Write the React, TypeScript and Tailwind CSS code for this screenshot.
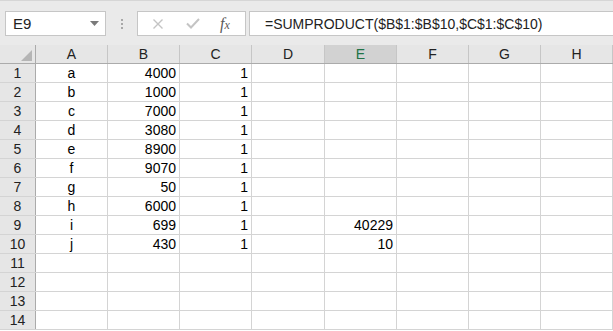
import React from 'react';

const cols = ['A', 'B', 'C', 'D', 'E', 'F', 'G', 'H'];
const colWidths = ['w-[72px]', 'w-[72px]', 'w-[72px]', 'w-[73px]', 'w-[72px]', 'w-[72px]', 'w-[72px]', 'w-[72px]'];

type Row = { a?: string; b?: string; c?: string; e?: string };

const rows: Row[] = [
  { a: 'a', b: '4000', c: '1' },
  { a: 'b', b: '1000', c: '1' },
  { a: 'c', b: '7000', c: '1' },
  { a: 'd', b: '3080', c: '1' },
  { a: 'e', b: '8900', c: '1' },
  { a: 'f', b: '9070', c: '1' },
  { a: 'g', b: '50', c: '1' },
  { a: 'h', b: '6000', c: '1' },
  { a: 'i', b: '699', c: '1', e: '40229' },
  { a: 'j', b: '430', c: '1', e: '10' },
  {},
  {},
  {},
  {},
];

function Toolbar() {
  return (
    <div className="h-[45px] bg-[#eaeaea] border-t border-[#d6d6d6] flex items-start pt-[10px] pl-[5px] gap-0">
      <div className="w-[101px] h-[25px] bg-white border border-[#c6c6c6] flex items-center justify-between pl-[7px] pr-[6px]">
        <span className="text-[15px] text-[#222] leading-none">E9</span>
        <svg width="9" height="5" viewBox="0 0 9 5">
          <path d="M0 0 L9 0 L4.5 5 Z" fill="#7a7a7a" />
        </svg>
      </div>
      <div className="w-[31px] h-[25px] flex flex-col items-center justify-center gap-[2px]">
        <span className="w-[2px] h-[2px] bg-[#a8a8a8]" />
        <span className="w-[2px] h-[2px] bg-[#a8a8a8]" />
        <span className="w-[2px] h-[2px] bg-[#a8a8a8]" />
      </div>
      <div className="w-[109px] h-[25px] bg-white border border-[#c6c6c6] flex items-center">
        <svg className="ml-[14px]" width="12" height="12" viewBox="0 0 12 12">
          <path d="M1.5 1.5 L10.5 10.5 M10.5 1.5 L1.5 10.5" stroke="#c4c4c4" strokeWidth="1.4" />
        </svg>
        <svg className="ml-[22px]" width="14" height="11" viewBox="0 0 14 11">
          <path d="M1 5.5 L5 9.5 L13 1" stroke="#c4c4c4" strokeWidth="2" fill="none" />
        </svg>
        <span className="ml-[20px] font-['Liberation_Serif',serif] italic text-[16px] text-[#5a5a5a] leading-none">
          f<span className="text-[12px]">x</span>
        </span>
      </div>
      <div className="ml-[3px] flex-1 h-[25px] bg-white border border-[#c6c6c6] border-r-0 flex items-center pl-[15px]">
        <span className="text-[14px] text-[#222] leading-none whitespace-nowrap">=SUMPRODUCT($B$1:$B$10,$C$1:$C$10)</span>
      </div>
    </div>
  );
}

function HeaderRow() {
  return (
    <div className="flex h-[19px] bg-[#e6e6e6] border-b border-[#ababab]">
      <div className="w-[36px] shrink-0 border-r border-[#ababab] relative">
        <svg className="absolute right-[3px] bottom-[2px]" width="11" height="11" viewBox="0 0 11 11">
          <path d="M11 0 L11 11 L0 11 Z" fill="#b5b5b5" />
        </svg>
      </div>
      {cols.map((c, i) => (
        <div
          key={c}
          className={`${colWidths[i]} shrink-0 border-r border-[#c6c6c6] flex items-center justify-center text-[14px] ${
            c === 'E' ? 'bg-[#d2d2d2] text-[#217346]' : 'text-[#222]'
          }`}
        >
          {c}
        </div>
      ))}
    </div>
  );
}

function Cell({ w, text, align }: { w: string; text?: string; align: 'left' | 'center' | 'right' }) {
  const justify = align === 'center' ? 'justify-center' : align === 'right' ? 'justify-end pr-[3px]' : 'justify-start pl-[3px]';
  return (
    <div className={`${w} shrink-0 border-r border-[#d4d4d4] flex items-center ${justify} text-[14px] text-black`}>
      {text}
    </div>
  );
}

export default function App() {
  return (
    <div className="w-[613px] h-[331px] overflow-hidden bg-white font-['Liberation_Sans',Arial,sans-serif]">
      <Toolbar />
      <HeaderRow />
      {rows.map((r, i) => (
        <div key={i} className="flex h-[19px] border-b border-[#d4d4d4]">
          <div className="w-[36px] shrink-0 bg-[#e6e6e6] border-r border-[#ababab] flex items-center justify-center text-[14px] text-[#222]">
            {i + 1}
          </div>
          <Cell w={colWidths[0]} text={r.a} align="center" />
          <Cell w={colWidths[1]} text={r.b} align="right" />
          <Cell w={colWidths[2]} text={r.c} align="right" />
          <Cell w={colWidths[3]} align="right" />
          <Cell w={colWidths[4]} text={r.e} align="right" />
          <Cell w={colWidths[5]} align="right" />
          <Cell w={colWidths[6]} align="right" />
          <Cell w={colWidths[7]} align="right" />
        </div>
      ))}
    </div>
  );
}
